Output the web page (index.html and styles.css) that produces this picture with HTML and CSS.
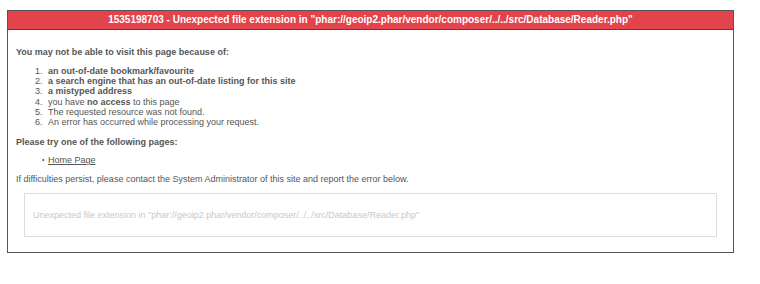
FILE: index.html
```html
<!DOCTYPE html>
<html>
<head>
<meta charset="utf-8">
<link rel="stylesheet" href="styles.css">
</head>
<body>
<div class="box">
  <div class="head">1535198703 - Unexpected file extension in "phar://geoip2.phar/vendor/composer/../../src/Database/Reader.php"</div>
  <div class="content">
    <p class="strong intro">You may not be able to visit this page because of:</p>
    <ol class="reasons">
      <li><b>an out-of-date bookmark/favourite</b></li>
      <li><b>a search engine that has an out-of-date listing for this site</b></li>
      <li><b>a mistyped address</b></li>
      <li>you have <b>no access</b> to this page</li>
      <li>The requested resource was not found.</li>
      <li>An error has occurred while processing your request.</li>
    </ol>
    <p class="strong try">Please try one of the following pages:</p>
    <ul class="pages">
      <li><a href="#">Home Page</a></li>
    </ul>
    <p class="persist">If difficulties persist, please contact the System Administrator of this site and report the error below.</p>
    <div class="error">Unexpected file extension in "phar://geoip2.phar/vendor/composer/../../src/Database/Reader.php"</div>
  </div>
</div>
</body>
</html>
```
FILE: styles.css
```css
html, body {
  margin: 0;
  padding: 0;
  background: #fff;
}
body {
  padding: 10px 0 0 7px;
  font-family: "Liberation Sans", Arial, sans-serif;
  font-size: 9px;
  color: #555;
}
.box {
  width: 727px;
  box-sizing: border-box;
  border: 1px solid #555;
}
.head {
  background: #e3434a;
  color: #fff;
  font-weight: bold;
  font-size: 10px;
  height: 18px;
  line-height: 18px;
  text-align: center;
  border-bottom: 1px solid #6a3a3a;
}
.content {
  padding: 16px 8px 15px 8px;
}
p {
  margin: 0;
  line-height: 12px;
}
.strong {
  font-weight: bold;
}
.intro {
  margin-bottom: 8px;
}
.reasons {
  margin: 0 0 9px 0;
  padding-left: 19px;
  line-height: 10.2px;
  list-style: none;
  counter-reset: reason;
}
.reasons li {
  counter-increment: reason;
}
.reasons li::before {
  content: counter(reason) ".";
  display: inline-block;
  width: 13px;
  font-weight: normal;
}
.try {
  margin-bottom: 6px;
}
.pages {
  margin: 0 0 7px 0;
  padding-left: 26px;
  line-height: 12px;
  list-style: none;
}
.pages li::before {
  content: "\2022";
  display: inline-block;
  width: 6px;
  font-size: 7px;
  vertical-align: 1px;
}
.pages a {
  color: #555;
}
.error {
  margin: 8px 8px 0 8px;
  border: 1px solid #ddd;
  height: 42px;
  line-height: 42px;
  padding: 0 8px;
  color: #c8c8c8;
}
```
